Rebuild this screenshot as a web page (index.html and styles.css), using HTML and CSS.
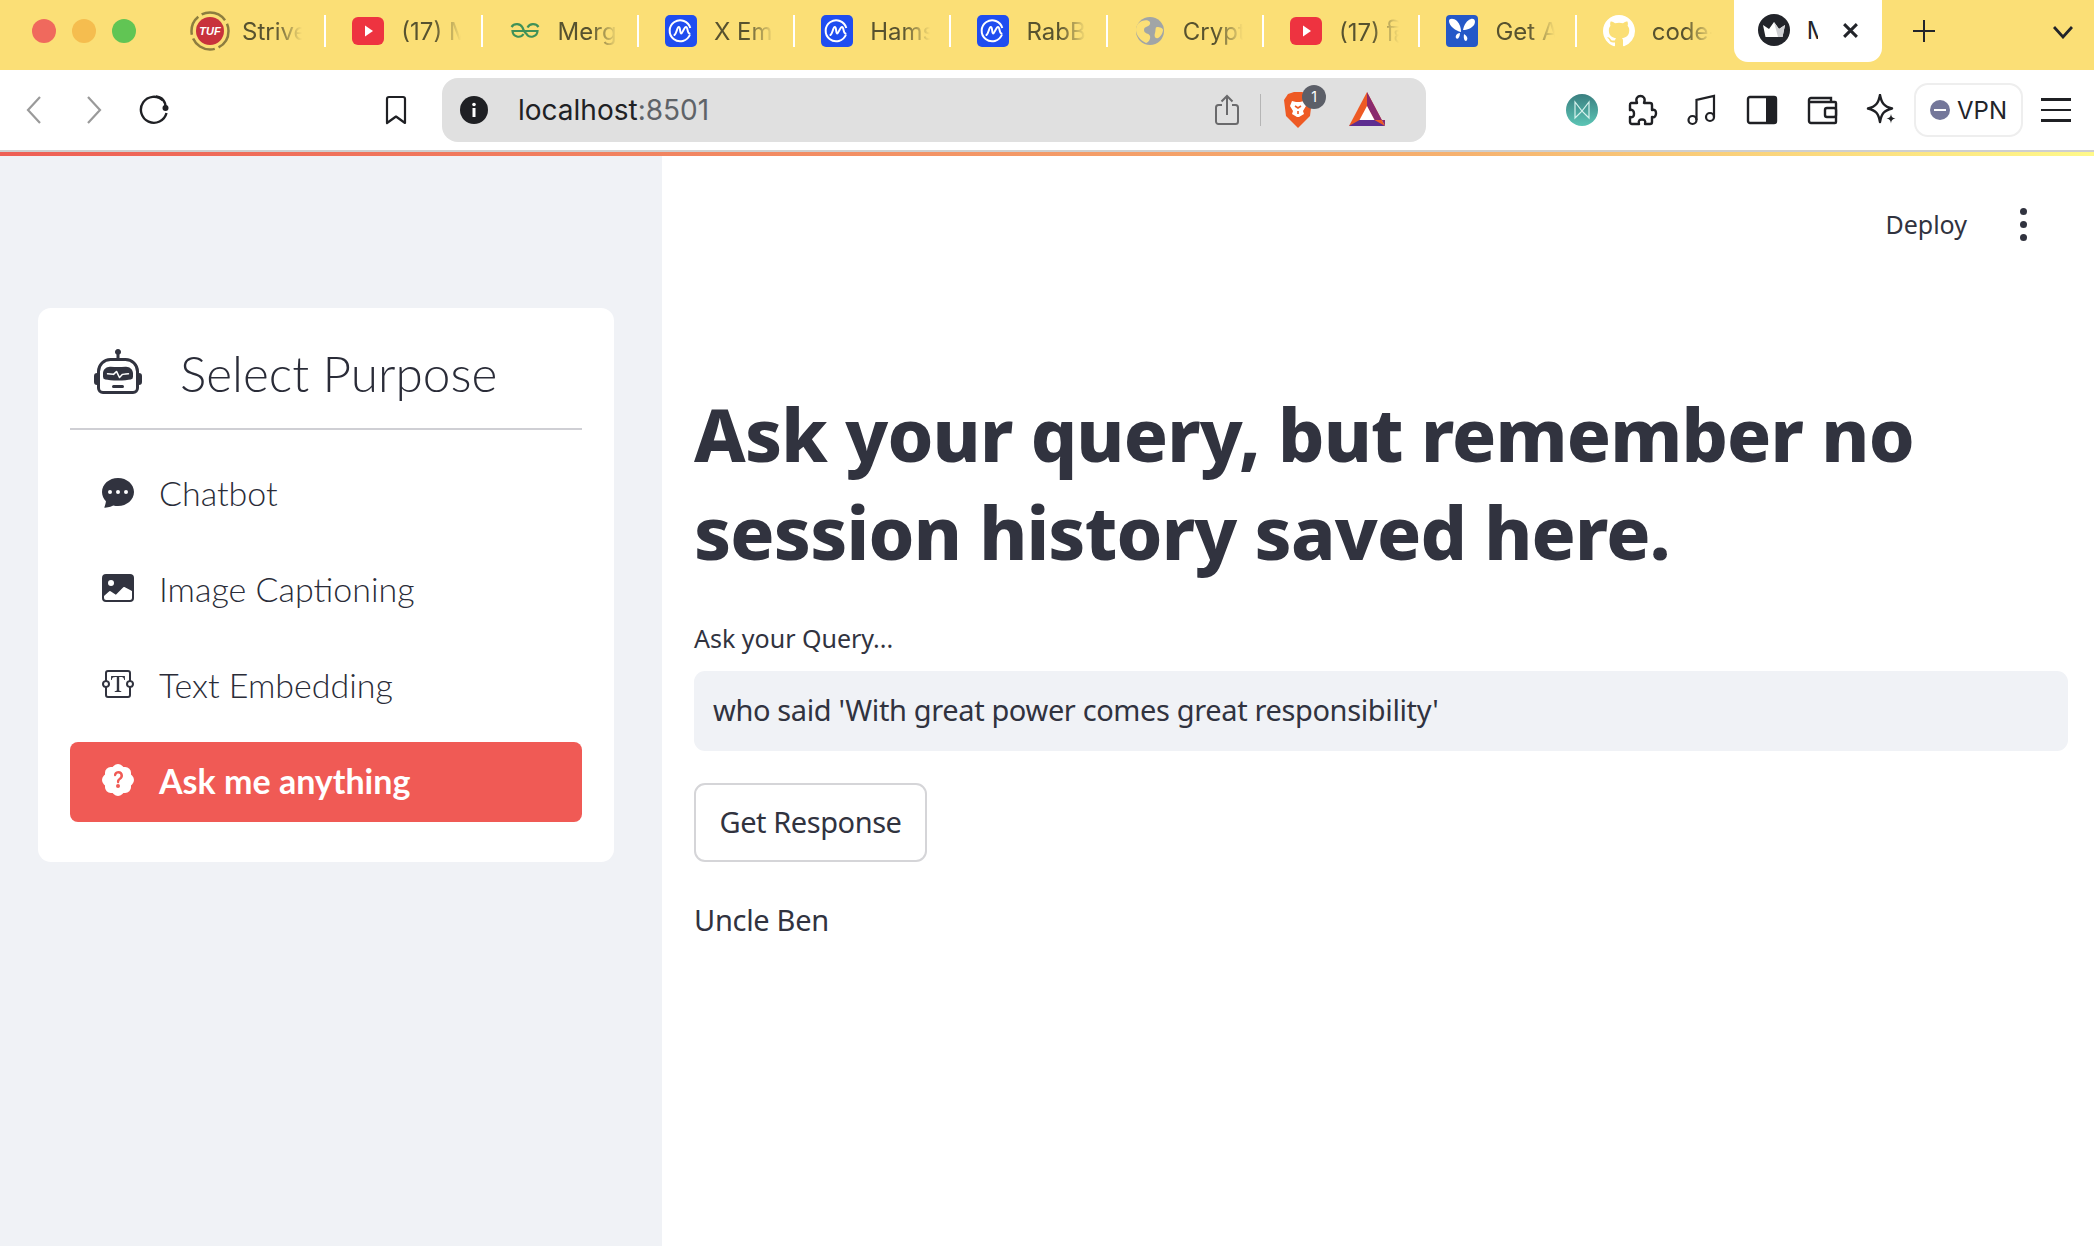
FILE: index.html
```html
<!DOCTYPE html>
<html lang="en">
<head>
    <meta charset="UTF-8">
    <meta name="viewport" content="width=device-width, initial-scale=1.0">
    <title>localhost:8501</title>
    <link rel="stylesheet" href="styles.css">
</head>
<body>
    <svg class="defs" width="0" height="0">
        <symbol id="yt" viewBox="0 0 32 28">
            <rect width="32" height="28" rx="6" fill="#ee3340"/>
            <path d="M13 8.5l8 5.5-8 5.500z" fill="#fff"/>
        </symbol>
        <symbol id="cmc" viewBox="0 0 32 32">
            <rect width="32" height="32" rx="5" fill="#1f4df0"/>
            <path d="M25 19.500a10.500 10.500 0 1 1 .3-6.500" fill="none" stroke="#fff" stroke-width="2"/>
            <path d="M9.500 20c2-1 2.500-8 4.300-8s1 6.500 2.400 6.500S19 12 21 12s1 6 3.500 6.500" fill="none" stroke="#fff" stroke-width="2" stroke-linecap="round"/>
        </symbol>
    </svg>

    <div class="tabstrip">
        <div class="lights">
            <span class="light red"></span>
            <span class="light amber"></span>
            <span class="light green"></span>
        </div>
        <div class="tabs">
            <div class="tab">
                <svg class="favicon tuf" viewBox="0 0 40 40">
                    <circle cx="20" cy="20" r="18.500" fill="none" stroke="#8d7d3f" stroke-width="2.500" stroke-dasharray="20 4 26 4"/>
                    <circle cx="20" cy="20" r="14" fill="#c8323c"/>
                    <text x="20" y="24" class="tuf-text">TUF</text>
                </svg>
                <span class="tab-title">Strive</span>
            </div>
            <div class="tab">
                <svg class="favicon"><use href="#yt"/></svg>
                <span class="tab-title">(17) Music</span>
            </div>
            <div class="tab">
                <svg class="favicon" viewBox="0 0 32 32">
                    <path d="M16 16H3.500a6 6 0 0 0 11 3M2.500 12a6.500 6.500 0 0 1 11 .5c1.500 4 3 6.500 5 6.500M16 16h12.500a6 6 0 0 1-11 3M29.500 12a6.500 6.500 0 0 0-11 .5" fill="none" stroke="#3f9158" stroke-width="2.200"/>
                </svg>
                <span class="tab-title">Merge</span>
            </div>
            <div class="tab">
                <svg class="favicon"><use href="#cmc"/></svg>
                <span class="tab-title">X Empire</span>
            </div>
            <div class="tab">
                <svg class="favicon"><use href="#cmc"/></svg>
                <span class="tab-title">Hamster</span>
            </div>
            <div class="tab">
                <svg class="favicon"><use href="#cmc"/></svg>
                <span class="tab-title">RabBit</span>
            </div>
            <div class="tab">
                <svg class="favicon" viewBox="0 0 32 32">
                    <circle cx="16" cy="16" r="14" fill="#a1a5a6"/>
                    <path d="M8 6c5-2 9 0 8 3s-6 2-6 6 5 3 6 6-2 7-4 7c-6-3-10-8-10-13S5 7 8 6zM23 12c3 0 6 1 6 3s-2 7-5 8-4-2-3-5 0-6 2-6z" fill="#fbdf76"/>
                </svg>
                <span class="tab-title">Crypto</span>
            </div>
            <div class="tab">
                <svg class="favicon"><use href="#yt"/></svg>
                <span class="tab-title">(17) हिंदी</span>
            </div>
            <div class="tab">
                <svg class="favicon" viewBox="0 0 32 32">
                    <rect width="32" height="32" rx="4" fill="#2458c8"/>
                    <path d="M15 17C10 16 3 11 3 6c0-3 5-3 8 0s4 7 4 11zM17 15c1-5 4-10 8-11s5 3 3 6-7 5-11 5zM14 18c-3 0-5 3-4 5s4 0 4-5zM18 19c3 2 4 4 3 6s-4 1-3-6z" fill="#fff"/>
                </svg>
                <span class="tab-title">Get API</span>
            </div>
            <div class="tab last">
                <svg class="favicon" viewBox="0 0 16 16">
                    <path fill="#fff" d="M8 0C3.580 0 0 3.580 0 8c0 3.540 2.290 6.530 5.470 7.590.4.070.55-.17.55-.38 0-.19-.01-.82-.01-1.490-2.010.37-2.530-.49-2.690-.94-.09-.23-.48-.94-.82-1.130-.28-.15-.68-.52-.01-.53.63-.01 1.080.58 1.230.82.72 1.210 1.870.87 2.330.66.07-.52.28-.87.51-1.070-1.780-.2-3.640-.89-3.640-3.950 0-.87.31-1.590.82-2.150-.08-.2-.36-1.020.08-2.120 0 0 .67-.21 2.200.82.64-.18 1.320-.27 2-.27.68 0 1.360.09 2 .27 1.530-1.040 2.200-.82 2.200-.82.44 1.100.16 1.920.08 2.120.51.56.82 1.270.82 2.150 0 3.070-1.870 3.750-3.650 3.950.29.25.54.73.54 1.480 0 1.070-.01 1.930-.01 2.200 0 .21.15.46.55.38A8.013 8.013 0 0 0 16 8c0-4.420-3.580-8-8-8z"/>
                </svg>
                <span class="tab-title">code-server</span>
            </div>
            <div class="tab-active">
                <svg class="favicon" viewBox="0 0 32 32">
                    <circle cx="16" cy="16" r="16" fill="#22242a"/>
                    <path d="M5 11l6 4 5-7 5 7 6-4-2.500 12h-17z" fill="#fff"/>
                    <path d="M16 8l5 7 6-4-2.500 12H20z" fill="#cfd0d3"/>
                </svg>
                <span class="tab-title-active">Multi</span>
                <svg class="tab-close" viewBox="0 0 16 16">
                    <path d="M2 2l12 12M14 2L2 14" stroke="#22242a" stroke-width="2.800"/>
                </svg>
            </div>
            <svg class="tab-new" viewBox="0 0 22 22">
                <path d="M11 0v22M0 11h22" stroke="#22242a" stroke-width="2"/>
            </svg>
        </div>
        <svg class="tab-more" viewBox="0 0 20 14">
            <path d="M1 2l9 10 9-10" fill="none" stroke="#22242a" stroke-width="2.800"/>
        </svg>
    </div>

    <div class="toolbar">
        <svg class="nav-back" viewBox="0 0 16 30">
            <path d="M14 2L2 15l12 13" fill="none" stroke="#9a9a9a" stroke-width="2.200"/>
        </svg>
        <svg class="nav-forward" viewBox="0 0 16 30">
            <path d="M2 2l12 13L2 28" fill="none" stroke="#9a9a9a" stroke-width="2.200"/>
        </svg>
        <svg class="nav-reload" viewBox="0 0 30 30">
            <path d="M24 5.500A13 13 0 1 0 27.500 18" fill="none" stroke="#1f2024" stroke-width="2.400"/>
            <circle cx="26.500" cy="13" r="3" fill="#1f2024"/>
            <path d="M17 1.500c6 .5 10 5 9.500 11.500" fill="none" stroke="#1f2024" stroke-width="2.400"/>
        </svg>
        <svg class="nav-bookmark" viewBox="0 0 22 30">
            <path d="M2 4a2 2 0 0 1 2-2h14a2 2 0 0 1 2 2v24l-9-6.500L2 28z" fill="none" stroke="#1f2024" stroke-width="2.200" stroke-linejoin="round"/>
        </svg>
        <div class="address">
            <svg class="site-info" viewBox="0 0 28 28">
                <circle cx="14" cy="14" r="14" fill="#1f2024"/>
                <rect x="12.500" y="12" width="3" height="9" fill="#fff"/>
                <circle cx="14" cy="8.500" r="1.800" fill="#fff"/>
            </svg>
            <span class="url">localhost<span class="url-port">:8501</span></span>
            <svg class="share" viewBox="0 0 24 32">
                <path d="M7 11H3.500A2.500 2.500 0 0 0 1 13.500v14A2.500 2.500 0 0 0 3.500 30h17a2.500 2.500 0 0 0 2.500-2.500v-14a2.500 2.500 0 0 0-2.500-2.500H17M12 21V2M6.500 7.500L12 2l5.500 5.500" fill="none" stroke="#6a6a6c" stroke-width="2"/>
            </svg>
            <span class="address-sep"></span>
            <span class="brave">
                <svg class="brave-icon" viewBox="0 0 28 36">
                    <path d="M4 2l6-2h8l6 2 4 6-2 16-12 12L2 24 0 8z" fill="#ee5a24"/>
                    <path d="M8 9l4 1h4l4-1 2 5-3 5 1 3-5 3h-2l-5-3 1-3-3-5z" fill="#fff"/>
                    <path d="M11 14l3 2 3-2M14 19v3" fill="none" stroke="#ee5a24" stroke-width="1.600"/>
                </svg>
                <span class="brave-badge">1</span>
            </span>
            <svg class="bat" viewBox="0 0 36 36">
                <path d="M18 0L0 34h36z" fill="#ee5a24"/>
                <path d="M18 0v14l7.500 14H36v6z" fill="#8a2a6e"/>
                <path d="M18 14l-7.500 14h15z" fill="#fff"/>
                <path d="M0 34l10.500-6h15L36 34z" fill="#5e2d91"/>
            </svg>
        </div>
        <svg class="ext-wallet" viewBox="0 0 32 32">
            <defs>
                <linearGradient id="tealfade" x1="0" y1="0" x2="0" y2="1">
                    <stop offset="0" stop-color="#3a7f80"/>
                    <stop offset="1" stop-color="#5cc5b5"/>
                </linearGradient>
            </defs>
            <circle cx="16" cy="16" r="16" fill="url(#tealfade)"/>
            <path d="M9 8v16l7-7 7 7V8l-7 9z" fill="none" stroke="#d6f1ec" stroke-width="1.200"/>
        </svg>
        <svg class="tool-icon" viewBox="0 0 32 32">
            <path d="M5 9h6c-2-5 1-7 3.500-7S20 4 18 9h6a2 2 0 0 1 2 2v5c4-1 4 2 4 3.500S29 24 26 23v5a2 2 0 0 1-2 2h-5c1-4-1-4.500-3-4.500S12 26 13 30H6a2 2 0 0 1-2-2v-5c4 1 4-2 4-3.500S7 15 4 16v-5a2 2 0 0 1 1-2z" fill="none" stroke="#1f2024" stroke-width="2.400" stroke-linejoin="round"/>
        </svg>
        <svg class="tool-icon" viewBox="0 0 32 32">
            <circle cx="6.500" cy="26" r="4" fill="none" stroke="#1f2024" stroke-width="2.200"/>
            <circle cx="24" cy="23" r="4" fill="none" stroke="#1f2024" stroke-width="2.200"/>
            <path d="M10.500 26V6L28 2v21" fill="none" stroke="#1f2024" stroke-width="2.200"/>
        </svg>
        <svg class="tool-icon" viewBox="0 0 32 32">
            <rect x="2" y="3" width="28" height="26" rx="2" fill="none" stroke="#1f2024" stroke-width="2.400"/>
            <rect x="20" y="3" width="10" height="26" fill="#1f2024"/>
        </svg>
        <svg class="tool-icon" viewBox="0 0 32 32">
            <path d="M4 8h25a1 1 0 0 1 1 1v19a1 1 0 0 1-1 1H5a2 2 0 0 1-2-2V6a2 2 0 0 1 2-2h20v4" fill="none" stroke="#1f2024" stroke-width="2.400"/>
            <rect x="19" y="14" width="11" height="9" rx="2" fill="#fff" stroke="#1f2024" stroke-width="2.400"/>
        </svg>
        <svg class="tool-icon" viewBox="0 0 32 32">
            <path d="M14 1c1.500 8 4 11.500 12 13.500-8 2-10.500 5-12 13.500-1.500-8.500-4-11.500-12-13.500C10 12.500 12.500 9 14 1z" fill="none" stroke="#1f2024" stroke-width="2.400" stroke-linejoin="round"/>
            <path d="M25 20c.5 3 1.500 4 4.500 4.500-3 .5-4 1.500-4.500 5-.5-3.500-1.500-4.500-4.500-5 3-.5 4-1.500 4.500-4.500z" fill="#1f2024"/>
        </svg>
        <div class="vpn">
            <span class="vpn-dot"></span>
            <span>VPN</span>
        </div>
        <div class="menu">
            <span></span>
            <span></span>
            <span></span>
        </div>
    </div>

    <div class="loadbar"></div>

    <div class="app">
        <aside class="sidebar">
            <nav class="card">
                <div class="card-head">
                    <svg class="robot" viewBox="0 0 16 16">
                        <path d="M6 12.500a.5.5 0 0 1 .5-.5h3a.5.5 0 0 1 0 1h-3a.5.5 0 0 1-.5-.5ZM3 8.062C3 6.760 4.235 5.765 5.530 5.886a26.580 26.580 0 0 0 4.940 0C11.765 5.765 13 6.760 13 8.062v1.157a.933.933 0 0 1-.765.935c-.845.147-2.340.346-4.235.346-1.895 0-3.390-.2-4.235-.346A.933.933 0 0 1 3 9.219V8.062Zm4.542-.827a.25.25 0 0 0-.217.068l-.92.9a24.767 24.767 0 0 1-1.871-.183.25.25 0 0 0-.068.495c.55.076 1.232.149 2.020.193a.25.25 0 0 0 .189-.071l.754-.736.847 1.710a.25.25 0 0 0 .404.062l.932-.97a25.286 25.286 0 0 0 1.922-.188.25.25 0 0 0-.068-.495c-.538.074-1.207.145-1.980.189a.25.25 0 0 0-.166.076l-.754.785-.842-1.700a.25.25 0 0 0-.182-.135Z"/>
                        <path d="M8.500 1.866a1 1 0 1 0-1 0V3h-2A4.500 4.500 0 0 0 1 7.500V8a1 1 0 0 0-1 1v2a1 1 0 0 0 1 1v1a2 2 0 0 0 2 2h10a2 2 0 0 0 2-2v-1a1 1 0 0 0 1-1V9a1 1 0 0 0-1-1v-.5A4.500 4.500 0 0 0 10.500 3h-2V1.866ZM14 7.500V13a1 1 0 0 1-1 1H3a1 1 0 0 1-1-1V7.500A3.500 3.500 0 0 1 5.500 4h5A3.500 3.500 0 0 1 14 7.500Z"/>
                    </svg>
                    <span class="card-title">Select Purpose</span>
                </div>
                <ul class="menu-list">
                    <li class="menu-item">
                        <svg class="menu-icon" viewBox="0 0 16 16">
                            <path d="M16 8c0 3.866-3.582 7-8 7a9.060 9.060 0 0 1-2.347-.306c-.584.296-1.925.864-4.181 1.234-.2.032-.352-.176-.273-.362.354-.836.674-1.950.77-2.966C.744 11.370 0 9.760 0 8c0-3.866 3.582-7 8-7s8 3.134 8 7zM5 8a1 1 0 1 0-2 0 1 1 0 0 0 2 0zm4 0a1 1 0 1 0-2 0 1 1 0 0 0 2 0zm3 1a1 1 0 1 0 0-2 1 1 0 0 0 0 2z"/>
                        </svg>
                        Chatbot
                    </li>
                    <li class="menu-item">
                        <svg class="menu-icon" viewBox="0 0 16 16">
                            <path d="M.002 3a2 2 0 0 1 2-2h12a2 2 0 0 1 2 2v10a2 2 0 0 1-2 2H2a2 2 0 0 1-2-2V3zm1 9v1a1 1 0 0 0 1 1h12a1 1 0 0 0 1-1V9.500l-3.777-1.947a.5.5 0 0 0-.577.093l-3.710 3.710-2.660-1.772a.5.5 0 0 0-.63.062L1.002 12zm5-6.500a1.500 1.500 0 1 0-3 0 1.500 1.500 0 0 0 3 0z"/>
                        </svg>
                        Image Captioning
                    </li>
                    <li class="menu-item">
                        <svg class="menu-icon" viewBox="0 0 16 16">
                            <path d="M1.500 2.500A1.500 1.500 0 0 1 3 1h10a1.500 1.500 0 0 1 1.500 1.500v3.563a2 2 0 0 1 0 3.874V13.500A1.500 1.500 0 0 1 13 15H3a1.500 1.500 0 0 1-1.500-1.500V9.937a2 2 0 0 1 0-3.874V2.500zm1 3.563a2 2 0 0 1 0 3.874V13.500a.5.5 0 0 0 .5.5h10a.5.5 0 0 0 .5-.5V9.937a2 2 0 0 1 0-3.874V2.500A.5.5 0 0 0 13 2H3a.5.5 0 0 0-.5.5v3.563zM2 7a1 1 0 1 0 0 2 1 1 0 0 0 0-2zm12 0a1 1 0 1 0 0 2 1 1 0 0 0 0-2z"/>
                            <path d="M11.434 4H4.566L4.500 5.994h.386c.21-1.252.612-1.446 2.173-1.495l.343-.011v6.343c0 .537-.116.665-1.049.748V12h3.294v-.421c-.938-.083-1.054-.21-1.054-.748V4.488l.348.010c1.560.05 1.963.244 2.173 1.496h.386L11.434 4z"/>
                        </svg>
                        Text Embedding
                    </li>
                    <li class="menu-item selected">
                        <svg class="menu-icon" viewBox="0 0 16 16">
                            <path d="M5.933.87a2.890 2.890 0 0 1 4.134 0l.622.638.89-.011a2.890 2.890 0 0 1 2.924 2.924l-.01.89.636.622a2.890 2.890 0 0 1 0 4.134l-.637.622.011.89a2.890 2.890 0 0 1-2.924 2.924l-.89-.01-.622.636a2.890 2.890 0 0 1-4.134 0l-.622-.637-.89.011a2.890 2.890 0 0 1-2.924-2.924l.01-.89-.636-.622a2.890 2.890 0 0 1 0-4.134l.637-.622-.011-.89a2.890 2.890 0 0 1 2.924-2.924l.89.010.622-.636zM7.002 11a1 1 0 1 0 2 0 1 1 0 0 0-2 0zm1.602-2.027c.04-.534.198-.815.846-1.260.674-.475 1.050-1.090 1.050-1.986 0-1.325-.92-2.227-2.262-2.227-1.020 0-1.792.492-2.100 1.290A1.710 1.710 0 0 0 6 5.480c0 .393.203.64.545.64.272 0 .455-.147.564-.51.158-.592.525-.915 1.074-.915.61 0 1.030.446 1.030 1.084 0 .563-.208.885-.822 1.325-.619.433-.926.914-.926 1.640v.111c0 .428.208.745.585.745.336 0 .504-.24.554-.627z"/>
                        </svg>
                        Ask me anything
                    </li>
                </ul>
            </nav>
        </aside>

        <main class="main">
            <header class="main-top">
                <span class="deploy">Deploy</span>
                <div class="kebab">
                    <span></span>
                    <span></span>
                    <span></span>
                </div>
            </header>
            <h1 class="title">Ask your query, but remember no<br>session history saved here.</h1>
            <label class="field-label">Ask your Query...</label>
            <div class="field">who said 'With great power comes great responsibility'</div>
            <button class="get-btn">Get Response</button>
            <p class="answer">Uncle Ben</p>
        </main>
    </div>
</body>
</html>
```

FILE: styles.css
```css
* {
    box-sizing: border-box;
}

html, body {
    margin: 0;
    padding: 0;
    height: 100%;
}

body {
    display: flex;
    flex-direction: column;
    overflow: hidden;
    background: #fff;
    color: #31333f;
    font-family: "Noto Sans", sans-serif;
}

.defs {
    position: absolute;
}

/* browser tabs */
.tabstrip {
    height: 70px;
    flex: none;
    display: flex;
    align-items: flex-start;
    background: #fbdf76;
}

.lights {
    width: 170px;
    height: 62px;
    flex: none;
    display: flex;
    align-items: center;
    gap: 16px;
    padding-left: 32px;
}

.light {
    width: 24px;
    height: 24px;
    border-radius: 50%;
}

.red { background: #f0695d; }
.amber { background: #f5bd4f; }
.green { background: #61c554; }

.tabs {
    display: flex;
    align-items: center;
    height: 62px;
}

.tab {
    width: 156.300px;
    height: 32px;
    display: flex;
    align-items: center;
    gap: 17px;
    padding-left: 26px;
    border-right: 2px solid #fff;
}

.tab.last {
    width: 157px;
    border-right: 0;
}

.favicon {
    width: 32px;
    height: 32px;
    flex: none;
}

.favicon.tuf {
    width: 40px;
    height: 40px;
    margin: 0 -5px 0 -6px;
}

.tuf-text {
    fill: #fff;
    font: italic 700 11px "Liberation Sans", sans-serif;
    text-anchor: middle;
}

.tab-title {
    width: 60px;
    overflow: hidden;
    white-space: nowrap;
    font: 24px Inter, sans-serif;
    color: #57522f;
    -webkit-mask-image: linear-gradient(90deg, #000 55%, transparent);
    mask-image: linear-gradient(90deg, #000 55%, transparent);
}

.tab-active {
    width: 148px;
    height: 64px;
    margin-top: -2px;
    display: flex;
    align-items: center;
    padding-left: 24px;
    background: #fff;
    border-radius: 0 0 14px 14px;
}

.tab-title-active {
    width: 11px;
    margin-left: 17px;
    overflow: hidden;
    white-space: nowrap;
    font: 24px Inter, sans-serif;
    color: #22242a;
}

.tab-close {
    width: 17px;
    height: 17px;
    margin-left: 24px;
}

.tab-new {
    width: 22px;
    height: 22px;
    margin-left: 31px;
}

.tab-more {
    width: 20px;
    height: 14px;
    margin: 25px 0 0 118px;
}

/* address bar row */
.toolbar {
    height: 80px;
    flex: none;
    display: flex;
    align-items: center;
    background: #fff;
}

.nav-back {
    width: 16px;
    height: 30px;
    margin-left: 26px;
}

.nav-forward {
    width: 16px;
    height: 30px;
    margin-left: 44px;
}

.nav-reload {
    width: 30px;
    height: 30px;
    margin-left: 37px;
}

.nav-bookmark {
    width: 22px;
    height: 30px;
    margin-left: 216px;
}

.address {
    width: 984px;
    height: 64px;
    margin-left: 35px;
    display: flex;
    align-items: center;
    padding-left: 18px;
    background: #e0e0e0;
    border-radius: 16px;
}

.site-info {
    width: 28px;
    height: 28px;
    flex: none;
}

.url {
    width: 697px;
    margin-left: 30px;
    font: 28px Inter, sans-serif;
    color: #202124;
}

.url-port {
    color: #5f6368;
}

.share {
    width: 24px;
    height: 32px;
}

.address-sep {
    width: 1px;
    height: 32px;
    margin-left: 21px;
    background: #b5b5b5;
}

.brave {
    position: relative;
    display: flex;
    margin-left: 23px;
}

.brave-icon {
    width: 28px;
    height: 36px;
}

.brave-badge {
    position: absolute;
    top: -7px;
    left: 18px;
    width: 24px;
    height: 24px;
    border-radius: 50%;
    background: #5c5f68;
    color: #fff;
    font: 14px/24px Inter, sans-serif;
    text-align: center;
}

.bat {
    width: 36px;
    height: 36px;
    margin-left: 37px;
}

.ext-wallet {
    width: 32px;
    height: 32px;
    margin-left: 140px;
}

.tool-icon {
    width: 32px;
    height: 32px;
    margin-left: 28px;
}

.vpn {
    width: 109px;
    height: 54px;
    margin-left: 16px;
    display: flex;
    align-items: center;
    gap: 7px;
    padding-left: 14px;
    border: 2px solid #eee;
    border-radius: 14px;
    font: 24px Inter, sans-serif;
    color: #22242a;
}

.vpn-dot {
    position: relative;
    width: 20px;
    height: 20px;
    border-radius: 50%;
    background: #74779a;
}

.vpn-dot::after {
    content: "";
    position: absolute;
    top: 9px;
    left: 4px;
    width: 12px;
    height: 2px;
    background: #fff;
}

.menu {
    width: 30px;
    margin-left: 18px;
    display: flex;
    flex-direction: column;
    gap: 8px;
}

.menu span {
    height: 2.500px;
    background: #1f2024;
}

.loadbar {
    height: 6px;
    flex: none;
    border-top: 2px solid #cfcfcf;
    background: linear-gradient(90deg, #ee5f55, #f6b26f 70%, #fff98a);
}

/* streamlit page */
.app {
    flex: 1;
    display: flex;
    min-height: 0;
}

.sidebar {
    width: 662px;
    flex: none;
    padding: 152px 48px 0 38px;
    background: #f0f2f6;
}

.card {
    height: 554px;
    padding: 0 32px;
    background: #fff;
    border-radius: 13px;
    font-family: Lato, sans-serif;
    color: #2a2c38;
}

.card-head {
    height: 122px;
    display: flex;
    align-items: center;
    padding: 10px 0 0 24px;
    border-bottom: 2px solid #cfcfd4;
}

.robot {
    width: 48px;
    height: 48px;
    fill: #31333f;
}

.card-title {
    margin-left: 38px;
    font-size: 49.500px;
    font-weight: 300;
}

.menu-list {
    list-style: none;
    margin: 24px 0 0;
    padding: 0;
    display: flex;
    flex-direction: column;
    gap: 16px;
}

.menu-item {
    height: 80px;
    display: flex;
    align-items: center;
    gap: 25px;
    padding: 0 0 4px 32px;
    border-radius: 8px;
    font-size: 34px;
    font-weight: 300;
}

.menu-icon {
    width: 32px;
    height: 32px;
    fill: #31333f;
}

.menu-item.selected {
    background: #f05a55;
    color: #fff;
    font-weight: 700;
}

.menu-item.selected .menu-icon {
    fill: #fff;
}

.main {
    flex: 1;
    padding: 0 26px 0 32px;
}

.main-top {
    height: 136px;
    display: flex;
    align-items: center;
    justify-content: flex-end;
}

.deploy {
    font-size: 25px;
}

.kebab {
    margin: 0 41px 0 53px;
    display: flex;
    flex-direction: column;
    gap: 6px;
}

.kebab span {
    width: 7px;
    height: 7px;
    border-radius: 50%;
    background: #31333f;
}

.title {
    margin: 93px 0 0;
    font-size: 73px;
    line-height: 98px;
    font-weight: 800;
    letter-spacing: -0.8px;
}

.field-label {
    display: block;
    margin-top: 37px;
    font-size: 25px;
    line-height: 40px;
}

.field {
    height: 80px;
    margin-top: 13px;
    display: flex;
    align-items: center;
    padding: 0 0 3px 19px;
    background: #f0f2f6;
    border-radius: 11px;
    font-size: 29px;
    letter-spacing: -0.37px;
}

.get-btn {
    display: block;
    width: 233px;
    height: 79px;
    margin-top: 32px;
    padding: 0 0 2px;
    background: #fff;
    border: 2px solid #d5d5d8;
    border-radius: 11px;
    color: #31333f;
    font-family: inherit;
    font-size: 29px;
    letter-spacing: -0.44px;
}

.answer {
    margin: 38px 0 0;
    font-size: 29px;
    line-height: 40px;
    letter-spacing: -0.3px;
}
```
